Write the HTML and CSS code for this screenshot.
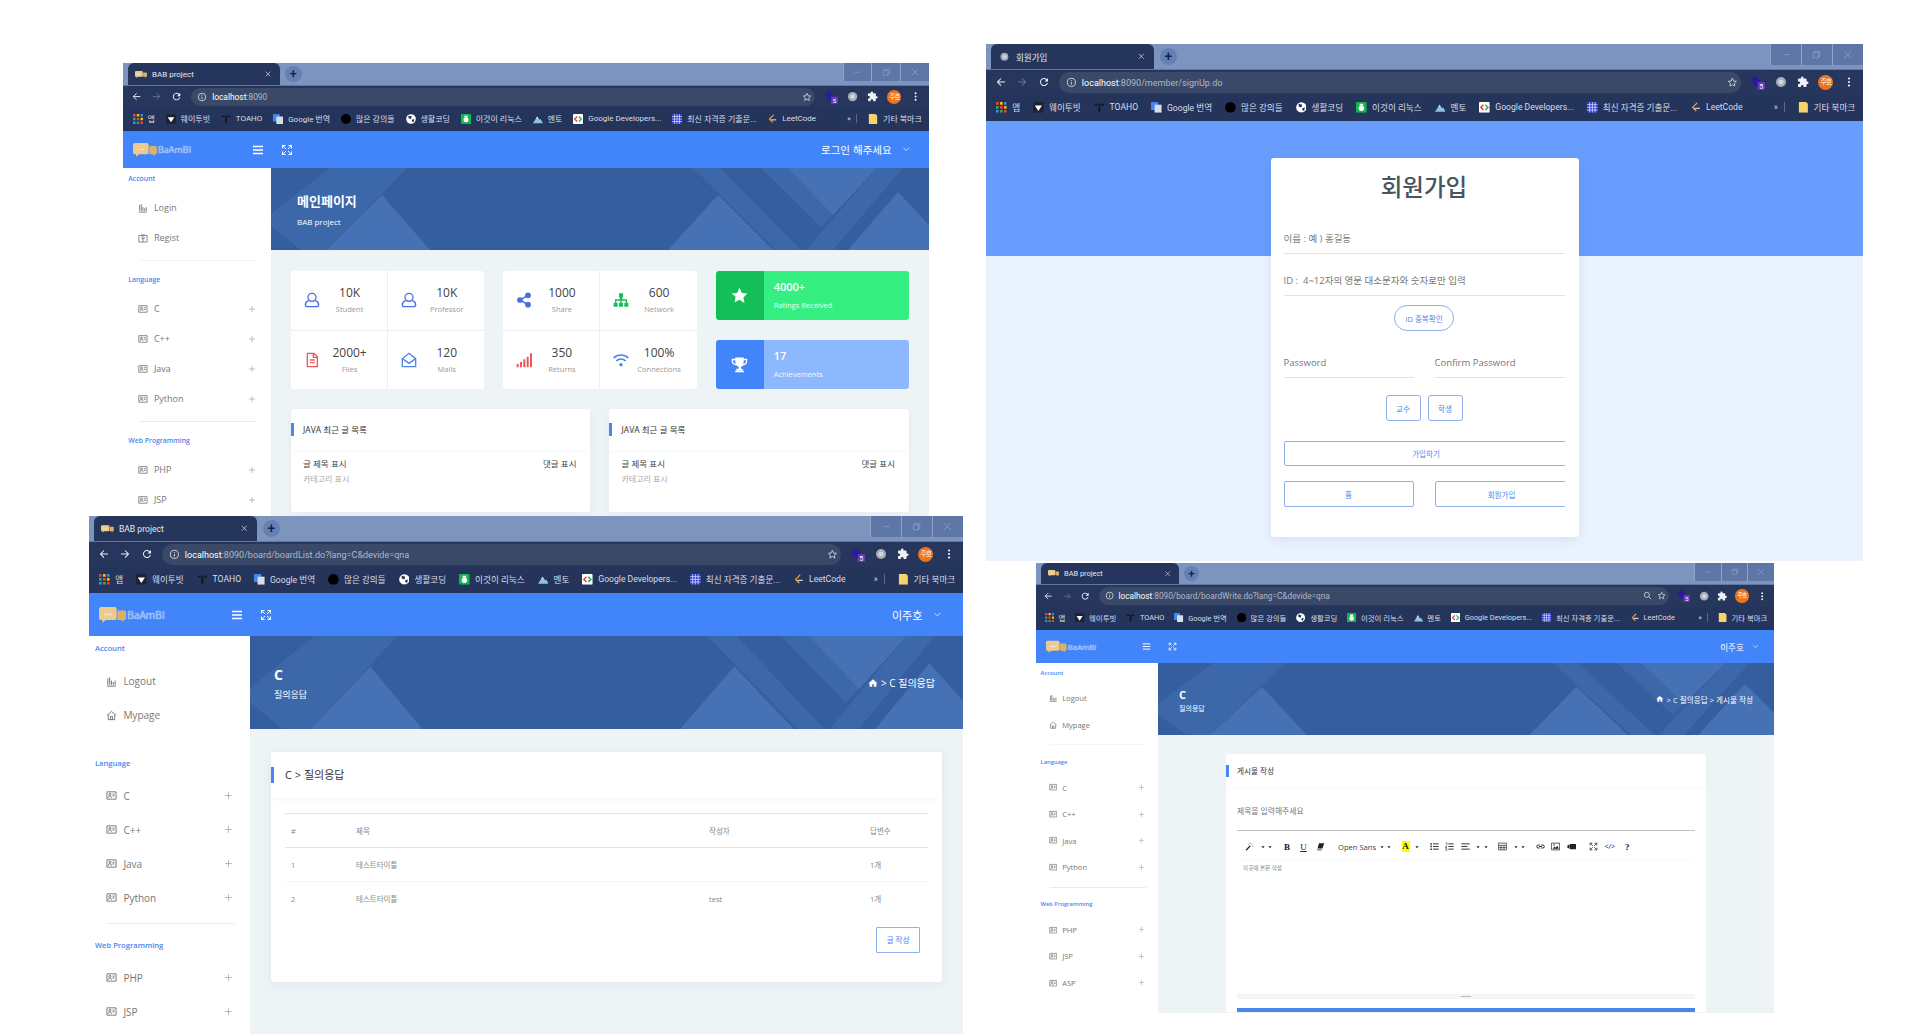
FILE: index.html
```html
<!DOCTYPE html>
<html lang="ko">
<head>
  <meta charset="UTF-8" />
  <title>BAB project</title>
  <link rel="stylesheet" href="styles.css">
</head>
<body>
  <!-- icon sprite -->
  <svg class="sprite" xmlns="http://www.w3.org/2000/svg">
    <symbol id="i-back" viewBox="0 0 24 24"><path d="M20 12H5M12 5l-7 7 7 7" fill="none" stroke="currentColor" stroke-width="2"/></symbol>
    <symbol id="i-forward" viewBox="0 0 24 24"><path d="M4 12h15M12 5l7 7-7 7" fill="none" stroke="currentColor" stroke-width="2"/></symbol>
    <symbol id="i-reload" viewBox="0 0 24 24"><path fill="currentColor" d="M17.65 6.35A8 8 0 1 0 19.73 14h-2.08A6 6 0 1 1 12 6c1.66 0 3.14.69 4.22 1.78L13 11h7V4l-2.35 2.35z"/></symbol>
    <symbol id="i-info" viewBox="0 0 24 24"><circle cx="12" cy="12" r="9" fill="none" stroke="currentColor" stroke-width="2"/><path d="M12 11v6M12 7v2" stroke="currentColor" stroke-width="2"/></symbol>
    <symbol id="i-search" viewBox="0 0 24 24"><circle cx="10" cy="10" r="6.5" fill="none" stroke="currentColor" stroke-width="2"/><path d="M15 15l6 6" stroke="currentColor" stroke-width="2"/></symbol>
    <symbol id="i-star-o" viewBox="0 0 24 24"><path d="M12 3l2.7 6 6.3.6-4.8 4.3 1.4 6.4L12 17l-5.600 3.300 1.400-6.400L3 9.600 9.300 9z" fill="none" stroke="currentColor" stroke-width="1.800"/></symbol>
    <symbol id="i-puzzle" viewBox="0 0 24 24"><path fill="currentColor" d="M20.500 11H19V7c0-1.100-.9-2-2-2h-4V3.500a2.500 2.500 0 0 0-5 0V5H4c-1.100 0-2 .9-2 2v3.800h1.500c1.500 0 2.700 1.200 2.700 2.700S5 16.200 3.500 16.200H2V20c0 1.100.9 2 2 2h3.800v-1.500c0-1.500 1.200-2.700 2.700-2.700s2.700 1.200 2.700 2.700V22H17c1.100 0 2-.9 2-2v-4h1.500a2.500 2.500 0 0 0 0-5z"/></symbol>
    <symbol id="i-kebab" viewBox="0 0 24 24"><circle cx="12" cy="5" r="2.200" fill="currentColor"/><circle cx="12" cy="12" r="2.200" fill="currentColor"/><circle cx="12" cy="19" r="2.200" fill="currentColor"/></symbol>
    <symbol id="i-ext" viewBox="0 0 24 24"><path d="M1 8l7-7 10 11-7 7z" fill="#2c1a9c"/><rect x="12" y="11" width="11" height="12" fill="#6b3ac4"/><text x="17.500" y="21" font-size="10" font-family="Roboto, sans-serif" fill="#fff" text-anchor="middle">5</text></symbol>
    <symbol id="i-ext2" viewBox="0 0 24 24"><circle cx="12" cy="12" r="10" fill="#a6acb8"/><circle cx="12" cy="12" r="5" fill="#d3d6dc"/></symbol>
    <symbol id="i-min" viewBox="0 0 24 24"><path d="M5 12h14" stroke="currentColor" stroke-width="1.500"/></symbol>
    <symbol id="i-restore" viewBox="0 0 24 24"><path d="M5 8h11v11H5zM8 8V5h11v11h-3" fill="none" stroke="currentColor" stroke-width="1.500"/></symbol>
    <symbol id="i-x" viewBox="0 0 24 24"><path d="M5 5l14 14M19 5L5 19" stroke="currentColor" stroke-width="1.800"/></symbol>
    <symbol id="i-menu" viewBox="0 0 24 24"><path d="M2 5h20M2 12h20M2 19h20" stroke="currentColor" stroke-width="2.600"/></symbol>
    <symbol id="i-expand" viewBox="0 0 24 24"><path d="M3 9V3h6M15 3h6v6M21 15v6h-6M9 21H3v-6M3 3l7 7M21 3l-7 7M21 21l-7-7M3 21l7-7" fill="none" stroke="currentColor" stroke-width="2"/></symbol>
    <symbol id="i-chevron" viewBox="0 0 24 24"><path d="M4 8l8 8 8-8" fill="none" stroke="currentColor" stroke-width="2"/></symbol>
    <symbol id="i-plus" viewBox="0 0 24 24"><path d="M12 3v18M3 12h18" stroke="currentColor" stroke-width="1.800"/></symbol>
    <symbol id="i-chart" viewBox="0 0 24 24"><path d="M2 22h20M4 19V5M8 19V3M12 19v-9M16 19v-6M20 19v-9" fill="none" stroke="currentColor" stroke-width="2"/></symbol>
    <symbol id="i-gift" viewBox="0 0 24 24"><path d="M2 6h20v16H2zM12 6v16M8 2l4 4 4-4M7 11l5 4 5-4" fill="none" stroke="currentColor" stroke-width="1.800"/></symbol>
    <symbol id="i-card" viewBox="0 0 24 24"><path d="M2 4h20v16H2zM14 9h5M14 13h5M5 17c0-3 1.500-4 3.500-4s3.500 1 3.500 4" fill="none" stroke="currentColor" stroke-width="1.800"/><circle cx="8.500" cy="9.500" r="2.300" fill="none" stroke="currentColor" stroke-width="1.800"/></symbol>
    <symbol id="i-home-o" viewBox="0 0 24 24"><path d="M2 12L12 3l10 9M5 10v11h14V10M10 21v-7h4v7" fill="none" stroke="currentColor" stroke-width="1.800"/></symbol>
    <symbol id="i-home" viewBox="0 0 24 24"><path fill="currentColor" d="M12 3L1 13h3v8h6v-6h4v6h6v-8h3z"/></symbol>
    <symbol id="i-user" viewBox="0 0 24 24"><circle cx="12" cy="8" r="6" fill="none" stroke="currentColor" stroke-width="2"/><path d="M7 13c-3 1-5 3-5 6 0 2 1 3 3 3h14c2 0 3-1 3-3 0-3-2-5-5-6" fill="none" stroke="currentColor" stroke-width="2"/></symbol>
    <symbol id="i-file" viewBox="0 0 24 24"><path d="M5 2h10l5 5v15H5zM14 2v6h6M9 12h7M9 16h7" fill="none" stroke="currentColor" stroke-width="2"/></symbol>
    <symbol id="i-mail" viewBox="0 0 24 24"><path d="M2 10l10-8 10 8v12H2zM2 10l10 7 10-7" fill="none" stroke="currentColor" stroke-width="2"/></symbol>
    <symbol id="i-share" viewBox="0 0 24 24"><circle cx="18" cy="5" r="4.300" fill="currentColor"/><circle cx="6" cy="12" r="4.300" fill="currentColor"/><circle cx="18" cy="19" r="4.300" fill="currentColor"/><path d="M18 5L6 12l12 7" fill="none" stroke="currentColor" stroke-width="2.400"/></symbol>
    <symbol id="i-sitemap" viewBox="0 0 24 24"><path fill="currentColor" d="M9 2h6v6h-1v3h7v5h2v6h-6v-6h2v-3h-6v3h2v6H9v-6h2v-3H5v3h2v6H1v-6h2v-5h7V8H9z"/></symbol>
    <symbol id="i-signal" viewBox="0 0 24 24"><path fill="currentColor" d="M1 18h3v5H1zM6 15h3v8H6zM11 11h3v12h-3zM16 7h3v16h-3zM21 2h3v21h-3z"/></symbol>
    <symbol id="i-wifi" viewBox="0 0 24 24"><path d="M1 9c6-6 16-6 22 0M5 13.500c4-4 10-4 14 0" fill="none" stroke="currentColor" stroke-width="2.600"/><circle cx="12" cy="19" r="2.600" fill="currentColor"/></symbol>
    <symbol id="i-star" viewBox="0 0 24 24"><path fill="currentColor" d="M12 1l3.400 7.300 7.800 1-5.700 5.500 1.500 7.900L12 18l-7 3.700 1.500-7.900L.8 9.300l7.800-1z"/></symbol>
    <symbol id="i-trophy" viewBox="0 0 24 24"><path fill="currentColor" d="M6 2h12v2h5v3c0 4-2.500 6-6 6.300-.8 1-1.800 1.700-3 2V18h2.500v2H7.500v-2H11v-2.700c-1.200-.3-2.200-1-3-2C4.500 13 1 11 1 7V4h5zM3 6v1c0 2.500 1.500 3.800 3.600 4.200C6.200 10 6 8 6 6zm15 0c0 2-.2 4-.6 5.200C19.500 10.800 21 9.500 21 7V6zM6 20.500h12V23H6z"/></symbol>
    <symbol id="i-logo" viewBox="0 0 40 24"><path d="M3 1h20a3 3 0 0 1 3 3v13a3 3 0 0 1-3 3H10l-5 4v-4H3a3 3 0 0 1-3-3V4a3 3 0 0 1 3-3z" fill="#eccb8c"/><path d="M27 6h10a3 3 0 0 1 3 3v8a3 3 0 0 1-3 3h-1v3l-4-3h-5z" fill="#d9b26a"/><path d="M8 11h2v2H8zM12 11h2v2h-2zM16 11h2v2h-2z" fill="#fff"/></symbol>
    <symbol id="i-fav-apps" viewBox="0 0 12 12"><path fill="#ea4335" d="M0 0h3v3H0z"/><path fill="#fbbc05" d="M4.500 0h3v3h-3z"/><path fill="#4285f4" d="M9 0h3v3H9z"/><path fill="#34a853" d="M0 4.500h3v3H0z"/><path fill="#ea4335" d="M4.500 4.500h3v3h-3z"/><path fill="#fbbc05" d="M9 4.500h3v3H9z"/><path fill="#4285f4" d="M0 9h3v3H0z"/><path fill="#34a853" d="M4.500 9h3v3h-3z"/><path fill="#ea4335" d="M9 9h3v3H9z"/></symbol>
    <symbol id="i-fav-way" viewBox="0 0 12 12"><rect width="12" height="12" rx="2" fill="#1d2233"/><path fill="#fff" d="M2 4h8L6 10z"/></symbol>
    <symbol id="i-fav-toaho" viewBox="0 0 12 12"><path fill="#11151f" d="M1 2h3v2H1zM8 2h3v2H8zM5 2h2v9H5z"/></symbol>
    <symbol id="i-fav-trans" viewBox="0 0 12 12"><rect width="8" height="9" fill="#4285f4"/><rect x="4" y="3" width="8" height="9" fill="#d8dde6"/></symbol>
    <symbol id="i-fav-dot" viewBox="0 0 12 12"><circle cx="6" cy="6" r="6" fill="#000"/></symbol>
    <symbol id="i-fav-globe" viewBox="0 0 12 12"><circle cx="6" cy="6" r="5.800" fill="#fff"/><path fill="#24345a" d="M3 2l4 1-1 3-3-1zM7 7l3-1-1 4-2-1z"/></symbol>
    <symbol id="i-fav-linux" viewBox="0 0 12 12"><rect width="12" height="12" rx="1" fill="#12b84c"/><circle cx="6" cy="7" r="3" fill="#fff"/><rect x="4" y="2" width="4" height="2" fill="#fff"/></symbol>
    <symbol id="i-fav-mount" viewBox="0 0 12 12"><path fill="#8fc1ea" d="M0 11l5-8 3 4 1-1 3 5z"/><path fill="#e8edf3" d="M5 3l1.500 2H3.800z"/></symbol>
    <symbol id="i-fav-gdev" viewBox="0 0 12 12"><rect width="12" height="12" rx="1" fill="#fff"/><path d="M5 3L2 6l3 3" fill="none" stroke="#ea4335" stroke-width="1.600"/><path d="M7 3l3 3-3 3" fill="none" stroke="#34a853" stroke-width="1.600"/></symbol>
    <symbol id="i-fav-grid" viewBox="0 0 12 12"><rect width="12" height="12" fill="#2a3bd0"/><path d="M3 0v12M6 0v12M9 0v12M0 3h12M0 6h12M0 9h12" stroke="#e6e9ff" stroke-width=".8"/></symbol>
    <symbol id="i-fav-leet" viewBox="0 0 12 12"><path d="M8 1L3 6l4 4" fill="none" stroke="#e7a33c" stroke-width="1.500"/><path d="M5 7h6" stroke="#c9ced8" stroke-width="1.400"/></symbol>
    <symbol id="i-fav-folder" viewBox="0 0 12 12"><path fill="#f6d46c" d="M1 0h8l2 2v10H1z"/></symbol>
    <symbol id="i-wand" viewBox="0 0 24 24"><path d="M3 22L14 10" stroke="currentColor" stroke-width="3"/><path d="M14 2v3M20 5l-2 2M22 11h-3M8 5l2 2" stroke="currentColor" stroke-width="1.500"/></symbol>
    <symbol id="i-eraser" viewBox="0 0 24 24"><path fill="currentColor" d="M8 3h14l-5 14H4zM3 20h12v2H3z"/></symbol>
    <symbol id="i-ul" viewBox="0 0 24 24"><path d="M8 5h15M8 12h15M8 19h15" stroke="currentColor" stroke-width="2.400"/><path d="M1 3h4v4H1zM1 10h4v4H1zM1 17h4v4H1z" fill="currentColor"/></symbol>
    <symbol id="i-ol" viewBox="0 0 24 24"><path d="M9 5h14M9 12h14M9 19h14" stroke="currentColor" stroke-width="2.400"/><path d="M2 2h3v6M1 11h4l-4 4h4M1 18h4v4H1" fill="none" stroke="currentColor" stroke-width="1.500"/></symbol>
    <symbol id="i-align" viewBox="0 0 24 24"><path d="M1 5h22M1 12h16M1 19h22" stroke="currentColor" stroke-width="2.400"/></symbol>
    <symbol id="i-table" viewBox="0 0 24 24"><path d="M1 3h22v18H1zM1 9h22M1 15h22M8 9v12M16 9v12" fill="none" stroke="currentColor" stroke-width="1.800"/></symbol>
    <symbol id="i-link" viewBox="0 0 24 24"><path d="M10 8H6a4 4 0 0 0 0 8h4M14 8h4a4 4 0 0 1 0 8h-4M8 12h8" fill="none" stroke="currentColor" stroke-width="2.600"/></symbol>
    <symbol id="i-picture" viewBox="0 0 24 24"><path d="M1 3h22v18H1z" fill="none" stroke="currentColor" stroke-width="2"/><path fill="currentColor" d="M4 18l6-6 3 3 4-5 4 8z"/><circle cx="8" cy="8" r="2" fill="currentColor"/></symbol>
    <symbol id="i-video" viewBox="0 0 24 24"><path fill="currentColor" d="M8 5h16v14H8zM1 9l6-3v12l-6-3z"/></symbol>
    <symbol id="i-caret" viewBox="0 0 10 10"><path fill="currentColor" d="M1 3h8L5 8z"/></symbol>
  </svg>

  <!-- main page window -->
  <section class="win win-main">
    <div class="tabstrip">
      <div class="tab"><svg class="fav"><use href="#i-logo"/></svg><span class="tab-title">BAB project</span><svg class="tab-close"><use href="#i-x"/></svg></div>
      <div class="new-tab">+</div>
      <div class="win-btns"><span><svg><use href="#i-min"/></svg></span><span><svg><use href="#i-restore"/></svg></span><span><svg><use href="#i-x"/></svg></span></div>
    </div>
    <div class="toolbar">
      <svg class="nav"><use href="#i-back"/></svg><svg class="nav dim"><use href="#i-forward"/></svg><svg class="nav"><use href="#i-reload"/></svg>
      <div class="omnibox"><svg class="nav"><use href="#i-info"/></svg><span class="url"><b>localhost</b>:8090</span><svg class="nav push"><use href="#i-star-o"/></svg></div>
      <svg class="nav ext"><use href="#i-ext"/></svg><svg class="nav"><use href="#i-ext2"/></svg><svg class="nav"><use href="#i-puzzle"/></svg><span class="avatar">주호</span><svg class="nav"><use href="#i-kebab"/></svg>
    </div>
    <div class="bookmarks">
      <span class="bm"><svg><use href="#i-fav-apps"/></svg>앱</span><span class="bm"><svg><use href="#i-fav-way"/></svg>웨이투빗</span><span class="bm"><svg><use href="#i-fav-toaho"/></svg>TOAHO</span><span class="bm"><svg><use href="#i-fav-trans"/></svg>Google 번역</span><span class="bm"><svg><use href="#i-fav-dot"/></svg>많은 강의들</span><span class="bm"><svg><use href="#i-fav-globe"/></svg>생활코딩</span><span class="bm"><svg><use href="#i-fav-linux"/></svg>이것이 리눅스</span><span class="bm"><svg><use href="#i-fav-mount"/></svg>멘토</span><span class="bm"><svg><use href="#i-fav-gdev"/></svg>Google Developers...</span><span class="bm"><svg><use href="#i-fav-grid"/></svg>최신 자격증 기출문...</span><span class="bm"><svg><use href="#i-fav-leet"/></svg>LeetCode</span>
      <span class="bm bm-more">»</span><span class="bm bm-other"><svg><use href="#i-fav-folder"/></svg>기타 북마크</span>
    </div>
    <header class="site-head">
      <div class="logo-box"><svg class="logo"><use href="#i-logo"/></svg><span class="logo-text">BaAmBI</span><svg class="head-ic menu"><use href="#i-menu"/></svg></div>
      <svg class="head-ic"><use href="#i-expand"/></svg>
      <span class="head-user">로그인 해주세요</span><svg class="head-chev"><use href="#i-chevron"/></svg>
    </header>
    <div class="site-body">
      <aside class="side">
        <div class="side-label">Account</div>
        <div class="side-item"><svg><use href="#i-chart"/></svg>Login</div>
        <div class="side-item"><svg><use href="#i-gift"/></svg>Regist</div>
        <hr class="side-rule">
        <div class="side-label">Language</div>
        <div class="side-item"><svg><use href="#i-card"/></svg>C<svg class="side-plus"><use href="#i-plus"/></svg></div>
        <div class="side-item"><svg><use href="#i-card"/></svg>C++<svg class="side-plus"><use href="#i-plus"/></svg></div>
        <div class="side-item"><svg><use href="#i-card"/></svg>Java<svg class="side-plus"><use href="#i-plus"/></svg></div>
        <div class="side-item"><svg><use href="#i-card"/></svg>Python<svg class="side-plus"><use href="#i-plus"/></svg></div>
        <hr class="side-rule">
        <div class="side-label">Web Programming</div>
        <div class="side-item"><svg><use href="#i-card"/></svg>PHP<svg class="side-plus"><use href="#i-plus"/></svg></div>
        <div class="side-item"><svg><use href="#i-card"/></svg>JSP<svg class="side-plus"><use href="#i-plus"/></svg></div>
      </aside>
      <main class="content">
        <div class="banner">
          <svg class="banner-art" viewBox="0 0 658 82" preserveAspectRatio="none"><path fill="#3c67a9" d="M0 46L59 0h77L56 82H30L0 58z"/><path fill="#4672b5" d="M111 27l48 55H56z"/><path fill="#3c67a9" d="M422 0h27l81 82h-25zM490 0h26l46 47-12 12zM606 0h26l-70 82h-27z"/><path fill="#4672b5" d="M447 27l55 55H397zM516 0h90l-44 47zM627 24l31 33v25h-81z"/></svg>
          <div class="banner-text"><h2>메인페이지</h2><p>BAB project</p></div>
        </div>
        <div class="dash">
          <div class="stat-grid">
            <div class="stat"><svg class="ic-indigo"><use href="#i-user"/></svg><div class="stat-text"><b>10K</b><span>Student</span></div></div>
            <div class="stat"><svg class="ic-indigo"><use href="#i-user"/></svg><div class="stat-text"><b>10K</b><span>Professor</span></div></div>
            <div class="stat"><svg class="ic-red"><use href="#i-file"/></svg><div class="stat-text"><b>2000+</b><span>Files</span></div></div>
            <div class="stat"><svg class="ic-blue"><use href="#i-mail"/></svg><div class="stat-text"><b>120</b><span>Mails</span></div></div>
          </div>
          <div class="stat-grid">
            <div class="stat"><svg class="ic-indigo"><use href="#i-share"/></svg><div class="stat-text"><b>1000</b><span>Share</span></div></div>
            <div class="stat"><svg class="ic-green"><use href="#i-sitemap"/></svg><div class="stat-text"><b>600</b><span>Network</span></div></div>
            <div class="stat"><svg class="ic-red"><use href="#i-signal"/></svg><div class="stat-text"><b>350</b><span>Returns</span></div></div>
            <div class="stat"><svg class="ic-blue"><use href="#i-wifi"/></svg><div class="stat-text"><b>100%</b><span>Connections</span></div></div>
          </div>
          <div class="promo-col">
            <div class="promo promo-green"><div class="promo-icon"><svg><use href="#i-star"/></svg></div><div class="promo-text"><b>4000+</b><span>Ratings Received</span></div></div>
            <div class="promo promo-blue"><div class="promo-icon"><svg><use href="#i-trophy"/></svg></div><div class="promo-text"><b>17</b><span>Achievements</span></div></div>
          </div>
          <div class="list-row">
            <div class="list-card"><div class="card-head"><h3>JAVA 최근 글 목록</h3></div><div class="list-item"><div><p>글 제목 표시</p><small>카테고리 표시</small></div><p>댓글 표시</p></div></div>
            <div class="list-card"><div class="card-head"><h3>JAVA 최근 글 목록</h3></div><div class="list-item"><div><p>글 제목 표시</p><small>카테고리 표시</small></div><p>댓글 표시</p></div></div>
          </div>
        </div>
      </main>
    </div>
  </section>

  <!-- sign up window -->
  <section class="win win-signup">
    <div class="tabstrip">
      <div class="tab"><svg class="fav"><use href="#i-ext2"/></svg><span class="tab-title">회원가입</span><svg class="tab-close"><use href="#i-x"/></svg></div>
      <div class="new-tab">+</div>
      <div class="win-btns"><span><svg><use href="#i-min"/></svg></span><span><svg><use href="#i-restore"/></svg></span><span><svg><use href="#i-x"/></svg></span></div>
    </div>
    <div class="toolbar">
      <svg class="nav"><use href="#i-back"/></svg><svg class="nav dim"><use href="#i-forward"/></svg><svg class="nav"><use href="#i-reload"/></svg>
      <div class="omnibox"><svg class="nav"><use href="#i-info"/></svg><span class="url"><b>localhost</b>:8090/member/signUp.do</span><svg class="nav push"><use href="#i-star-o"/></svg></div>
      <svg class="nav ext"><use href="#i-ext"/></svg><svg class="nav"><use href="#i-ext2"/></svg><svg class="nav"><use href="#i-puzzle"/></svg><span class="avatar">주호</span><svg class="nav"><use href="#i-kebab"/></svg>
    </div>
    <div class="bookmarks">
      <span class="bm"><svg><use href="#i-fav-apps"/></svg>앱</span><span class="bm"><svg><use href="#i-fav-way"/></svg>웨이투빗</span><span class="bm"><svg><use href="#i-fav-toaho"/></svg>TOAHO</span><span class="bm"><svg><use href="#i-fav-trans"/></svg>Google 번역</span><span class="bm"><svg><use href="#i-fav-dot"/></svg>많은 강의들</span><span class="bm"><svg><use href="#i-fav-globe"/></svg>생활코딩</span><span class="bm"><svg><use href="#i-fav-linux"/></svg>이것이 리눅스</span><span class="bm"><svg><use href="#i-fav-mount"/></svg>멘토</span><span class="bm"><svg><use href="#i-fav-gdev"/></svg>Google Developers...</span><span class="bm"><svg><use href="#i-fav-grid"/></svg>최신 자격증 기출문...</span><span class="bm"><svg><use href="#i-fav-leet"/></svg>LeetCode</span>
      <span class="bm bm-more">»</span><span class="bm bm-other"><svg><use href="#i-fav-folder"/></svg>기타 북마크</span>
    </div>
    <div class="signup-page">
      <form class="signup-card">
        <h1>회원가입</h1>
        <input class="field" placeholder="이름 : 예 ) 홍길동">
        <input class="field" placeholder="ID :  4~12자의 영문 대소문자와 숫자로만 입력">
        <div class="btn-line"><button type="button" class="btn btn-pill">ID 중복확인</button></div>
        <div class="two-col"><input class="field" placeholder="Password"><input class="field" placeholder="Confirm Password"></div>
        <div class="btn-line role-line"><button type="button" class="btn btn-role">교수</button><button type="button" class="btn btn-role">학생</button></div>
        <div class="clip"><button type="button" class="btn btn-wide">가입하기</button></div>
        <div class="two-col clip"><button type="button" class="btn btn-half">홈</button><button type="button" class="btn btn-half btn-cut">회원가입</button></div>
      </form>
    </div>
  </section>

  <!-- board list window -->
  <section class="win win-list">
    <div class="tabstrip">
      <div class="tab"><svg class="fav"><use href="#i-logo"/></svg><span class="tab-title">BAB project</span><svg class="tab-close"><use href="#i-x"/></svg></div>
      <div class="new-tab">+</div>
      <div class="win-btns"><span><svg><use href="#i-min"/></svg></span><span><svg><use href="#i-restore"/></svg></span><span><svg><use href="#i-x"/></svg></span></div>
    </div>
    <div class="toolbar">
      <svg class="nav"><use href="#i-back"/></svg><svg class="nav"><use href="#i-forward"/></svg><svg class="nav"><use href="#i-reload"/></svg>
      <div class="omnibox"><svg class="nav"><use href="#i-info"/></svg><span class="url"><b>localhost</b>:8090/board/boardList.do?lang=C&amp;devide=qna</span><svg class="nav push"><use href="#i-star-o"/></svg></div>
      <svg class="nav ext"><use href="#i-ext"/></svg><svg class="nav"><use href="#i-ext2"/></svg><svg class="nav"><use href="#i-puzzle"/></svg><span class="avatar">주호</span><svg class="nav"><use href="#i-kebab"/></svg>
    </div>
    <div class="bookmarks">
      <span class="bm"><svg><use href="#i-fav-apps"/></svg>앱</span><span class="bm"><svg><use href="#i-fav-way"/></svg>웨이투빗</span><span class="bm"><svg><use href="#i-fav-toaho"/></svg>TOAHO</span><span class="bm"><svg><use href="#i-fav-trans"/></svg>Google 번역</span><span class="bm"><svg><use href="#i-fav-dot"/></svg>많은 강의들</span><span class="bm"><svg><use href="#i-fav-globe"/></svg>생활코딩</span><span class="bm"><svg><use href="#i-fav-linux"/></svg>이것이 리눅스</span><span class="bm"><svg><use href="#i-fav-mount"/></svg>멘토</span><span class="bm"><svg><use href="#i-fav-gdev"/></svg>Google Developers...</span><span class="bm"><svg><use href="#i-fav-grid"/></svg>최신 자격증 기출문...</span><span class="bm"><svg><use href="#i-fav-leet"/></svg>LeetCode</span>
      <span class="bm bm-more">»</span><span class="bm bm-other"><svg><use href="#i-fav-folder"/></svg>기타 북마크</span>
    </div>
    <header class="site-head">
      <div class="logo-box"><svg class="logo"><use href="#i-logo"/></svg><span class="logo-text">BaAmBI</span><svg class="head-ic menu"><use href="#i-menu"/></svg></div>
      <svg class="head-ic"><use href="#i-expand"/></svg>
      <span class="head-user">이주호</span><svg class="head-chev"><use href="#i-chevron"/></svg>
    </header>
    <div class="site-body">
      <aside class="side">
        <div class="side-label">Account</div>
        <div class="side-item"><svg><use href="#i-chart"/></svg>Logout</div>
        <div class="side-item"><svg><use href="#i-home-o"/></svg>Mypage</div>
        <hr class="side-rule">
        <div class="side-label">Language</div>
        <div class="side-item"><svg><use href="#i-card"/></svg>C<svg class="side-plus"><use href="#i-plus"/></svg></div>
        <div class="side-item"><svg><use href="#i-card"/></svg>C++<svg class="side-plus"><use href="#i-plus"/></svg></div>
        <div class="side-item"><svg><use href="#i-card"/></svg>Java<svg class="side-plus"><use href="#i-plus"/></svg></div>
        <div class="side-item"><svg><use href="#i-card"/></svg>Python<svg class="side-plus"><use href="#i-plus"/></svg></div>
        <hr class="side-rule">
        <div class="side-label">Web Programming</div>
        <div class="side-item"><svg><use href="#i-card"/></svg>PHP<svg class="side-plus"><use href="#i-plus"/></svg></div>
        <div class="side-item"><svg><use href="#i-card"/></svg>JSP<svg class="side-plus"><use href="#i-plus"/></svg></div>
      </aside>
      <main class="content">
        <div class="banner">
          <svg class="banner-art" viewBox="0 0 658 82" preserveAspectRatio="none"><path fill="#3c67a9" d="M0 46L59 0h77L56 82H30L0 58z"/><path fill="#4672b5" d="M111 27l48 55H56z"/><path fill="#3c67a9" d="M422 0h27l81 82h-25zM490 0h26l46 47-12 12zM606 0h26l-70 82h-27z"/><path fill="#4672b5" d="M447 27l55 55H397zM516 0h90l-44 47zM627 24l31 33v25h-81z"/></svg>
          <div class="banner-text"><h2>C</h2><p>질의응답</p></div>
          <div class="crumb"><svg><use href="#i-home"/></svg> &gt; C 질의응답</div>
        </div>
        <div class="board-card">
          <div class="card-head"><h3>C &gt; 질의응답</h3></div>
          <div class="board-inner">
            <table class="board-table">
              <thead><tr><th class="col-no">#</th><th class="col-title">제목</th><th class="col-author">작성자</th><th>답변수</th></tr></thead>
              <tbody>
                <tr><td>1</td><td>테스트타이틀</td><td></td><td>1개</td></tr>
                <tr><td>2</td><td>테스트타이틀</td><td>test</td><td>1개</td></tr>
              </tbody>
            </table>
            <div class="board-foot"><button type="button" class="btn btn-write">글 작성</button></div>
          </div>
        </div>
      </main>
    </div>
  </section>

  <!-- board write window -->
  <section class="win win-write">
    <div class="tabstrip">
      <div class="tab"><svg class="fav"><use href="#i-logo"/></svg><span class="tab-title">BAB project</span><svg class="tab-close"><use href="#i-x"/></svg></div>
      <div class="new-tab">+</div>
      <div class="win-btns"><span><svg><use href="#i-min"/></svg></span><span><svg><use href="#i-restore"/></svg></span><span><svg><use href="#i-x"/></svg></span></div>
    </div>
    <div class="toolbar">
      <svg class="nav"><use href="#i-back"/></svg><svg class="nav dim"><use href="#i-forward"/></svg><svg class="nav"><use href="#i-reload"/></svg>
      <div class="omnibox"><svg class="nav"><use href="#i-info"/></svg><span class="url"><b>localhost</b>:8090/board/boardWrite.do?lang=C&amp;devide=qna</span><svg class="nav push"><use href="#i-search"/></svg><svg class="nav"><use href="#i-star-o"/></svg></div>
      <svg class="nav ext"><use href="#i-ext"/></svg><svg class="nav"><use href="#i-ext2"/></svg><svg class="nav"><use href="#i-puzzle"/></svg><span class="avatar">주호</span><svg class="nav"><use href="#i-kebab"/></svg>
    </div>
    <div class="bookmarks">
      <span class="bm"><svg><use href="#i-fav-apps"/></svg>앱</span><span class="bm"><svg><use href="#i-fav-way"/></svg>웨이투빗</span><span class="bm"><svg><use href="#i-fav-toaho"/></svg>TOAHO</span><span class="bm"><svg><use href="#i-fav-trans"/></svg>Google 번역</span><span class="bm"><svg><use href="#i-fav-dot"/></svg>많은 강의들</span><span class="bm"><svg><use href="#i-fav-globe"/></svg>생활코딩</span><span class="bm"><svg><use href="#i-fav-linux"/></svg>이것이 리눅스</span><span class="bm"><svg><use href="#i-fav-mount"/></svg>멘토</span><span class="bm"><svg><use href="#i-fav-gdev"/></svg>Google Developers...</span><span class="bm"><svg><use href="#i-fav-grid"/></svg>최신 자격증 기출문...</span><span class="bm"><svg><use href="#i-fav-leet"/></svg>LeetCode</span>
      <span class="bm bm-more">»</span><span class="bm bm-other"><svg><use href="#i-fav-folder"/></svg>기타 북마크</span>
    </div>
    <header class="site-head">
      <div class="logo-box"><svg class="logo"><use href="#i-logo"/></svg><span class="logo-text">BaAmBI</span><svg class="head-ic menu"><use href="#i-menu"/></svg></div>
      <svg class="head-ic"><use href="#i-expand"/></svg>
      <span class="head-user">이주호</span><svg class="head-chev"><use href="#i-chevron"/></svg>
    </header>
    <div class="site-body">
      <aside class="side">
        <div class="side-label">Account</div>
        <div class="side-item"><svg><use href="#i-chart"/></svg>Logout</div>
        <div class="side-item"><svg><use href="#i-home-o"/></svg>Mypage</div>
        <hr class="side-rule">
        <div class="side-label">Language</div>
        <div class="side-item"><svg><use href="#i-card"/></svg>C<svg class="side-plus"><use href="#i-plus"/></svg></div>
        <div class="side-item"><svg><use href="#i-card"/></svg>C++<svg class="side-plus"><use href="#i-plus"/></svg></div>
        <div class="side-item"><svg><use href="#i-card"/></svg>Java<svg class="side-plus"><use href="#i-plus"/></svg></div>
        <div class="side-item"><svg><use href="#i-card"/></svg>Python<svg class="side-plus"><use href="#i-plus"/></svg></div>
        <hr class="side-rule">
        <div class="side-label">Web Programming</div>
        <div class="side-item"><svg><use href="#i-card"/></svg>PHP<svg class="side-plus"><use href="#i-plus"/></svg></div>
        <div class="side-item"><svg><use href="#i-card"/></svg>JSP<svg class="side-plus"><use href="#i-plus"/></svg></div>
        <div class="side-item"><svg><use href="#i-card"/></svg>ASP<svg class="side-plus"><use href="#i-plus"/></svg></div>
      </aside>
      <main class="content">
        <div class="banner">
          <svg class="banner-art" viewBox="0 0 658 82" preserveAspectRatio="none"><path fill="#3c67a9" d="M0 46L59 0h77L56 82H30L0 58z"/><path fill="#4672b5" d="M111 27l48 55H56z"/><path fill="#3c67a9" d="M422 0h27l81 82h-25zM490 0h26l46 47-12 12zM606 0h26l-70 82h-27z"/><path fill="#4672b5" d="M447 27l55 55H397zM516 0h90l-44 47zM627 24l31 33v25h-81z"/></svg>
          <div class="banner-text"><h2>C</h2><p>질의응답</p></div>
          <div class="crumb"><svg><use href="#i-home"/></svg> &gt; C 질의응답 &gt; 게시물 작성</div>
        </div>
        <div class="write-card">
          <div class="card-head"><h3>게시물 작성</h3></div>
          <div class="write-inner">
            <input class="write-title" placeholder="제목을 입력해주세요">
            <div class="editor">
              <div class="ed-tools">
                <svg class="ed-ic"><use href="#i-wand"/></svg><svg class="ed-caret"><use href="#i-caret"/></svg><svg class="ed-caret"><use href="#i-caret"/></svg>
                <span class="ed-txt ed-gap">B</span><span class="ed-txt ed-under">U</span><svg class="ed-ic"><use href="#i-eraser"/></svg>
                <span class="ed-font ed-gap">Open Sans</span><svg class="ed-caret"><use href="#i-caret"/></svg><svg class="ed-caret"><use href="#i-caret"/></svg>
                <span class="ed-txt ed-color ed-gap">A</span><svg class="ed-caret"><use href="#i-caret"/></svg>
                <svg class="ed-ic ed-gap"><use href="#i-ul"/></svg><svg class="ed-ic"><use href="#i-ol"/></svg><svg class="ed-ic"><use href="#i-align"/></svg><svg class="ed-caret"><use href="#i-caret"/></svg><svg class="ed-caret"><use href="#i-caret"/></svg>
                <svg class="ed-ic ed-gap"><use href="#i-table"/></svg><svg class="ed-caret"><use href="#i-caret"/></svg><svg class="ed-caret"><use href="#i-caret"/></svg>
                <svg class="ed-ic ed-gap"><use href="#i-link"/></svg><svg class="ed-ic"><use href="#i-picture"/></svg><svg class="ed-ic"><use href="#i-video"/></svg>
                <svg class="ed-ic ed-gap"><use href="#i-expand"/></svg><span class="ed-code">&lt;/&gt;</span><span class="ed-txt">?</span>
              </div>
              <div class="ed-body">이곳에 본문 작성</div>
              <div class="ed-resize"><span></span></div>
            </div>
            <div class="write-submit"></div>
          </div>
        </div>
      </main>
    </div>
  </section>
</body>
</html>
```

FILE: styles.css
```css
* { box-sizing: border-box; }
body { margin: 0; width: 1920px; height: 1034px; overflow: hidden; position: relative; background: #fff; font-family: "Open Sans", "Noto Sans CJK KR", sans-serif; color: #444; }
.sprite { display: none; }
h1, h2, h3, p { margin: 0; }

/* the four windows sit on a free canvas */
.win { position: absolute; overflow: hidden; display: flex; flex-direction: column; background: #eef3f6; }
.win-main { left: 123px; top: 63px; width: 806px; height: 453px; --tab-h: 23px; --tool-h: 22px; --bm-h: 23px; --head-h: 37px; --side-w: 148px; --row: 30px; --tab-w: 152px; --chrome-fs: 8px; --side-fs: 9px; --head-fs: 10.5px; --banner-h: 82px; --bm-gap: 11px; --logo-h: 15px; --head-ic: 12px; --user-right: 10px; }
.win-signup { left: 986px; top: 44px; width: 877px; height: 517px; --tab-h: 26px; --tool-h: 25px; --bm-h: 26px; --tab-w: 163px; --chrome-fs: 8.6px; --bm-gap: 13px; }
.win-list { left: 89px; top: 516px; width: 874px; height: 518px; --tab-h: 26px; --tool-h: 25px; --bm-h: 26px; --head-h: 43px; --side-w: 161px; --row: 34px; --tab-w: 163px; --chrome-fs: 8.6px; --side-fs: 10px; --head-fs: 11px; --banner-h: 93px; --bm-gap: 13px; --logo-h: 17px; --head-ic: 12px; --user-right: 11px; }
.win-write { left: 1036px; top: 563px; width: 738px; height: 450px; --tab-h: 22px; --tool-h: 22px; --bm-h: 23px; --head-h: 33px; --side-w: 122px; --row: 26.5px; --tab-w: 138px; --chrome-fs: 7.4px; --side-fs: 7.6px; --head-fs: 8.6px; --banner-h: 72px; --bm-gap: 10px; --logo-h: 13px; --head-ic: 9px; --user-right: 8px; }

/* browser chrome */
.tabstrip { height: var(--tab-h); flex: none; display: flex; align-items: flex-end; background: #7d94bf; padding-left: 5px; font-size: var(--chrome-fs); font-family: Roboto, "Noto Sans CJK KR", sans-serif; border-bottom: 1px solid #64789f; }
.tab { width: var(--tab-w); height: 100%; background: #25355b; border-radius: 6px 6px 0 0; display: flex; align-items: center; padding: 0 8px 0 7px; color: #e4e8f0; }
.fav { width: 1.5em; height: 1.1em; margin-right: 5px; }
.tab-title { flex: 1; }
.tab-close { width: 1em; height: 1em; color: #f2f4f8; }
.new-tab { width: 1.3em; height: 1.3em; margin: 0 auto 0 0.4em; border-radius: 50%; background: #6580b4; color: #14213d; text-align: center; line-height: 1.22em; font-size: 1.6em; font-weight: 500; align-self: center; }
.win-btns { display: flex; align-self: flex-start; height: 84%; }
.win-btns span { width: 3.6em; display: flex; align-items: center; justify-content: center; background: #5d76a6; border-left: 1px solid #8fa4c9; color: #8fa4c9; }
.win-btns svg { width: 1.3em; height: 1.3em; }
.toolbar { height: var(--tool-h); flex: none; display: flex; align-items: center; gap: 1.1em; background: #26365c; padding: 0 0.95em 0 1em; font-size: var(--chrome-fs); color: #eef1f6; font-family: Roboto, "Noto Sans CJK KR", sans-serif; }
.nav { width: 1.4em; height: 1.4em; flex: none; }
.nav.dim { color: #66748f; }
.ext { width: 1.8em; height: 1.8em; }
.omnibox { flex: 1; height: 84%; display: flex; align-items: center; gap: 0.6em; background: #3b4968; border-radius: 1.4em; padding: 0 0.4em 0 0.8em; color: #dde2ea; font-size: 1em; }
.omnibox .nav { width: 1.25em; height: 1.25em; }
.push { margin-left: auto; }
.url { color: #aeb7c9; font-size: 1.05em; }
.win-write .url { font-size: 1.12em; }
.url b { color: #fff; font-weight: 400; }
.avatar { width: 2.2em; height: 2.2em; border-radius: 50%; background: #ee741a; color: #fff; font-size: 0.8em; text-align: center; line-height: 2.2em; flex: none; letter-spacing: -1px; }
.bookmarks { height: var(--bm-h); flex: none; display: flex; align-items: center; gap: var(--bm-gap); background: #24345a; color: #d9deea; padding: 0 0.9em 0.2em 1.2em; font-size: var(--chrome-fs); font-family: Roboto, "Noto Sans CJK KR", sans-serif; white-space: nowrap; overflow: hidden; }
.bm { display: flex; align-items: center; gap: 0.6em; }
.bm svg { width: 1.25em; height: 1.25em; flex: none; }
.bm-more { margin-left: auto; padding-right: 0.7em; border-right: 1px solid #5a6988; }

/* site header */
.site-head { height: var(--head-h); flex: none; display: flex; align-items: center; background: #4285fb; color: #fff; }
.logo-box { width: var(--side-w); display: flex; align-items: center; padding-left: 10px; }
.logo { height: var(--logo-h); width: calc(var(--logo-h) * 1.6); flex: none; }
.logo-text { font-size: calc(var(--logo-h) * 0.6); color: #93bcfa; margin-left: 1px; text-shadow: 0 0 1px #e8f1ff; white-space: nowrap; }
.head-ic { width: var(--head-ic); height: var(--head-ic); flex: none; margin-left: 10px; }
.menu { margin-left: auto; margin-right: 7px; }
.head-user { margin-left: auto; font-size: var(--head-fs); font-family: "Noto Sans CJK KR", sans-serif; }
.head-chev { width: 0.8em; height: 0.8em; font-size: var(--head-fs); margin: 0 calc(var(--user-right) * 1.9) 0 var(--user-right); flex: none; }

/* sidebar */
.site-body { flex: 1; display: flex; min-height: 0; }
.side { width: var(--side-w); flex: none; background: #fff; font-size: var(--side-fs); color: #777; }
.side-label { height: calc(var(--row) * 0.733); margin-bottom: calc(var(--row) * 0.1); padding-left: 0.78em; font-size: 0.76em; font-weight: 600; color: #4a86f0; display: flex; align-items: center; }
.side-item { height: var(--row); display: flex; align-items: center; padding-left: 1.67em; position: relative; white-space: nowrap; }
.side-item > svg:first-child { width: 1.1em; height: 1.1em; margin-right: 0.67em; color: #666; flex: none; }
.side-plus { width: 0.9em; height: 0.9em; margin-left: auto; margin-right: 1.7em; color: #999; flex: none; }
.side-rule { border: 0; border-top: 1px solid #e8ebef; margin: calc(var(--row) * 0.233) 1.6em calc(var(--row) * 0.267) 1.8em; }
.side-rule:first-of-type { border-top-color: #f3f4f6; }
.win-list .side-rule:first-of-type { border-top-color: transparent; }

/* page body */
.content { flex: 1; min-width: 0; background: #eef3f6; }
.banner { height: var(--banner-h); background: #355e9e; position: relative; display: flex; align-items: center; justify-content: space-between; color: #fff; overflow: hidden; }
.banner-art { position: absolute; inset: 0; width: 100%; height: 100%; }
.banner-text, .crumb { position: relative; }
.win-main .banner-text { padding-left: 26px; }
.win-main .banner-text h2 { font-size: 13px; font-weight: 700; line-height: 20px; margin-bottom: 5px; }
.win-main .banner-text p { font-size: 8px; }
.win-list .banner-text { padding-left: 24px; }
.win-list .banner-text h2 { font-size: 14px; font-weight: 700; line-height: 22px; margin-bottom: 2px; }
.win-list .banner-text p { font-size: 9px; }
.win-write .banner-text { padding-left: 21px; }
.win-write .banner-text h2 { font-size: 11px; font-weight: 700; line-height: 17px; }
.win-write .banner-text p { font-size: 7px; }
.crumb { display: flex; align-items: center; gap: 3px; white-space: nowrap; }
.crumb svg { width: 1em; height: 1em; }
.win-list .crumb { font-size: 10px; padding-right: 28px; }
.win-write .crumb { font-size: 7.6px; padding-right: 21px; }

.card-head { display: flex; align-items: center; box-shadow: 0 3px 5px -2px rgba(40, 60, 90, 0.06); }
.card-head h3 { font-weight: 400; color: #333; border-left: 3px solid #4a86f0; }

/* dashboard */
.dash { display: grid; grid-template-columns: repeat(3, 1fr); column-gap: 19px; padding: 21px 20px 0; }
.stat-grid { display: grid; grid-template-columns: 1fr 1fr; grid-auto-rows: 58.5px; gap: 1px; background: #eceff2; border-radius: 3px; overflow: hidden; }
.stat { display: flex; align-items: center; padding-left: 13px; background: #fff; }
.stat svg { width: 16px; height: 16px; flex: none; }
.stat-text { flex: 1; padding-right: 8px; padding-bottom: 1px; display: flex; flex-direction: column; align-items: center; }
.stat-text b { font-size: 12px; font-weight: 400; color: #444; line-height: 16px; }
.stat-text span { font-size: 7.5px; color: #999; margin-top: 3px; line-height: 10px; white-space: nowrap; }
.ic-indigo { color: #4e6ee8; }
.ic-red { color: #e9585a; }
.ic-blue { color: #4a86e8; }
.ic-green { color: #14c05b; }
.promo-col { display: flex; flex-direction: column; justify-content: space-between; }
.promo { height: 49px; display: flex; border-radius: 3px; overflow: hidden; color: #fff; }
.promo-icon { width: 48px; display: flex; align-items: center; justify-content: center; }
.promo-icon svg { width: 17px; height: 17px; }
.promo-text { flex: 1; padding: 8px 10px 0; display: flex; flex-direction: column; }
.promo-text b { font-size: 11px; font-weight: 600; line-height: 15px; }
.promo-text span { font-size: 7.5px; margin-top: 6px; line-height: 11px; opacity: 0.9; }
.promo-green .promo-icon { background: #14bf5a; }
.promo-green .promo-text { background: #36ef82; }
.promo-blue .promo-icon { background: #4285fb; }
.promo-blue .promo-text { background: #8db8fd; }
.list-row { grid-column: 1 / -1; display: grid; grid-template-columns: 1fr 1fr; gap: 19px; margin-top: 20px; }
.list-card { height: 103px; background: #fff; border-radius: 3px; box-shadow: 0 2px 8px rgba(60, 80, 110, 0.05); }
.list-card .card-head { height: 41px; }
.list-card h3 { font-size: 8.5px; line-height: 13px; padding-left: 9px; }
.list-item { display: flex; justify-content: space-between; padding: 8px 14px 0 12px; font-size: 8.5px; color: #444; }
.list-item p { line-height: 12px; }
.list-item small { display: block; font-size: 8px; color: #aaa; margin-top: 3px; line-height: 12px; }

/* sign up */
.signup-page { flex: 1; background: linear-gradient(#689dfd 135px, #eaf2fd 135px); padding-top: 37px; }
.signup-card { width: 308px; height: 379px; margin: 0 auto; padding: 0 14px 0 13px; background: #fff; border-radius: 3px; box-shadow: 0 3px 12px rgba(60, 90, 140, 0.1); }
.signup-card h1 { font-size: 23.5px; font-weight: 500; color: #46555f; text-align: center; line-height: 28px; padding-top: 15px; height: 65px; }
.field { display: block; width: 100%; height: 31px; border: 0; border-bottom: 1px solid #dfe3e7; outline: 0; padding: 0; font-size: 9.5px; font-family: inherit; background: transparent; margin-bottom: 11px; }
.field::placeholder { color: #777; opacity: 1; }
.btn-line { display: flex; justify-content: center; gap: 7px; }
.btn { background: #fff; border: 1px solid #8fb2ee; color: #4a86f0; font-size: 7.5px; font-family: inherit; padding: 0; height: 26px; border-radius: 3px; }
.btn-pill { width: 60px; border-radius: 13px; margin-bottom: 16px; margin-top: -2px; }
.two-col { display: grid; grid-template-columns: 130px 130px; column-gap: 21px; }
.btn-role { width: 35px; margin: 6px 0 20px; }
.clip { overflow: hidden; }
.btn-wide { display: block; width: calc(100% + 4px); height: 25px; border-radius: 2px; margin-bottom: 15px; }
.btn-half { height: 26px; border-radius: 2px; }
.btn-cut { width: 134px; }

/* board list */
.board-card { margin: 23px 21px 0; height: 230px; background: #fff; border-radius: 3px; box-shadow: 0 3px 12px rgba(60, 80, 110, 0.07); }
.board-card .card-head { height: 46px; }
.board-card h3 { font-size: 11px; line-height: 16px; padding-left: 11px; }
.board-inner { padding: 15px 14px 0; }
.board-table { width: 100%; border-collapse: collapse; font-size: 7.5px; color: #888; border-top: 1px solid #e3e6e9; }
.board-table th { font-weight: 400; text-align: left; height: 34px; padding: 0 6px; border-bottom: 1px solid #dfe2e6; }
.board-table td { height: 34px; padding: 0 6px; border-bottom: 1px solid #f3f4f6; }
.board-table tr:last-child td { border-bottom: 0; }
.col-no { width: 65px; }
.col-author { width: 161px; }
.col-title { width: 353px; }
.board-foot { display: flex; justify-content: flex-end; padding-right: 8px; margin-top: 11px; }
.btn-write { width: 44px; border-radius: 1px; }

/* board write */
.write-card { margin: 19px 68px 0; height: 258px; background: #fff; border-radius: 3px 3px 0 0; }
.write-card .card-head { height: 33px; }
.write-card h3 { font-size: 7.6px; line-height: 12px; padding-left: 8px; }
.write-inner { padding: 14px 11px 0; }
.write-title { display: block; width: 100%; height: 20px; border: 0; outline: 0; padding: 0; font-size: 7.8px; font-family: inherit; background: transparent; margin-bottom: 9px; }
.write-title::placeholder { color: #777; opacity: 1; }
.editor { border-top: 1px solid #bfc3c7; height: 169px; display: flex; flex-direction: column; }
.ed-tools { height: 28px; flex: none; display: flex; align-items: center; padding: 3px 0 0 8px; gap: 3.5px; color: #222; box-shadow: 0 1px 1px rgba(0, 0, 0, 0.02); }
.ed-ic { width: 9px; height: 9px; flex: none; margin-right: 3px; }
.ed-caret { width: 4px; height: 4px; flex: none; }
.ed-gap { margin-left: 7px; }
.ed-txt { font: 700 9px "Liberation Serif", serif; width: 9px; text-align: center; margin-right: 4px; }
.ed-under { text-decoration: underline; font-weight: 400; }
.ed-font { font-size: 7.6px; white-space: nowrap; color: #444; }
.ed-color { background: #ff0; line-height: 11px; width: 8px; margin-right: 2px; }
.ed-code { font-size: 7px; margin-right: 4px; }
.ed-body { flex: 1; padding: 5px 6px; font-size: 5.6px; color: #888; }
.ed-resize { height: 5px; flex: none; background: #f5f5f5; display: flex; justify-content: center; align-items: center; }
.ed-resize span { width: 10px; height: 1px; background: #bbb; }
.write-submit { height: 4px; margin-top: 9px; background: #4a86e8; }
```
